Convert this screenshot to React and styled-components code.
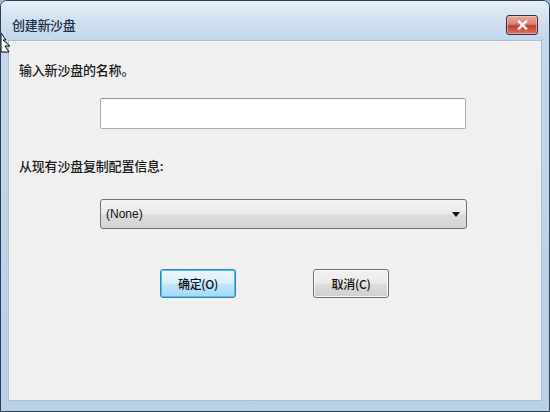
import styled, { createGlobalStyle } from 'styled-components'

const GlobalStyle = createGlobalStyle`
  html, body {
    margin: 0;
    padding: 0;
    background: #9fb7d3;
  }
  body {
    font-family: 'Noto Sans CJK SC', 'Liberation Sans', sans-serif;
  }
`

const Window = styled.div`
  position: relative;
  box-sizing: border-box;
  width: 550px;
  height: 412px;
  display: flex;
  flex-direction: column;
  border: 1px solid #2c3e50;
  border-radius: 7px 7px 0 0;
  background: linear-gradient(180deg, #dde9f5 0%, #c4d7ec 10%, #b9d0e9 100%);
  overflow: hidden;
`

const TitleBar = styled.div`
  height: 39px;
  display: flex;
  align-items: center;
  justify-content: space-between;
  padding: 0 11px 0 11px;
  box-sizing: border-box;
  background: linear-gradient(180deg, #e6eff8 0%, #d3e1f0 45%, #c2d6ec 100%);
`

const Title = styled.span`
  font-size: 13px;
  font-weight: 500;
  color: #1d2f45;
  letter-spacing: -0.3px;
  padding-top: 8px;
`

const CloseButton = styled.button`
  width: 32px;
  height: 20px;
  margin-top: 8px;
  padding: 0;
  display: flex;
  align-items: center;
  justify-content: center;
  border: 1px solid #3d2a3a;
  border-radius: 3px;
  background: linear-gradient(180deg, #e7aa9a 0%, #d98070 45%, #c0402e 55%, #d4786a 100%);
  box-shadow: inset 0 0 0 1px rgba(255, 220, 210, 0.5);
`

const Body = styled.div`
  flex: 1;
  margin: 0 7px 10px 7px;
  padding: 20px 0 0 9px;
  background: #f0f0f0;
  border: 1px solid #a9bfd6;
  display: flex;
  flex-direction: column;
`

const Label = styled.div`
  font-size: 13px;
  font-weight: 500;
  line-height: 18px;
  color: #1a1a1a;
  letter-spacing: -0.2px;
  padding-left: 1px;
  margin-top: ${p => p.$top || 0}px;
`

const Indent = styled.div`
  padding-left: ${p => p.$left}px;
  margin-top: ${p => p.$top}px;
  display: flex;
  gap: ${p => p.$gap || 0}px;
`

const TextInput = styled.input`
  box-sizing: border-box;
  width: 366px;
  height: 31px;
  border: 1px solid #abadb3;
  border-top-color: #8f949c;
  border-radius: 2px;
  background: #ffffff;
  outline: none;
`

const Select = styled.div`
  box-sizing: border-box;
  width: 367px;
  height: 30px;
  display: flex;
  align-items: center;
  justify-content: space-between;
  padding: 0 6px 0 5px;
  border: 1px solid #707070;
  border-radius: 3px;
  background: linear-gradient(180deg, #f4f4f4 0%, #ebebeb 48%, #dddddd 52%, #d3d3d3 100%);
  font-family: 'Liberation Sans', sans-serif;
  font-size: 12px;
  color: #111;
`

const Arrow = styled.span`
  width: 0;
  height: 0;
  border-left: 4px solid transparent;
  border-right: 4px solid transparent;
  border-top: 5px solid #111;
`

const Button = styled.button`
  box-sizing: border-box;
  width: 76px;
  height: 29px;
  border-radius: 3px;
  font-family: 'Noto Sans CJK SC', 'Liberation Sans', sans-serif;
  font-size: 12px;
  font-weight: 500;
  color: #111;
  letter-spacing: -0.3px;
  padding: 0;
  border: 1px solid ${p => (p.$primary ? '#3c7fb1' : '#707070')};
  background: ${p =>
    p.$primary
      ? 'linear-gradient(180deg, #eaf6fd 0%, #d9f0fc 48%, #bee6fd 52%, #a7d9f5 100%)'
      : 'linear-gradient(180deg, #f2f2f2 0%, #ebebeb 48%, #dddddd 52%, #cfcfcf 100%)'};
  box-shadow: ${p =>
    p.$primary ? 'inset 0 0 0 1px #48c3ee' : 'inset 0 0 0 1px rgba(255,255,255,0.8)'};
`

const Cursor = styled.svg`
  position: absolute;
  left: 0;
  top: 30px;
`

export default function App() {
  return (
    <>
      <GlobalStyle />
      <Window>
        <TitleBar>
          <Title>创建新沙盘</Title>
          <CloseButton aria-label="关闭">
            <svg width="11" height="10" viewBox="0 0 11 10">
              <path d="M2 1.5 L9 8.5 M9 1.5 L2 8.5" stroke="#fff" strokeWidth="2.4" strokeLinecap="square" />
            </svg>
          </CloseButton>
        </TitleBar>
        <Body>
          <Label>输入新沙盘的名称。</Label>
          <Indent $left={82} $top={19}>
            <TextInput />
          </Indent>
          <Label $top={28}>从现有沙盘复制配置信息:</Label>
          <Indent $left={82} $top={24}>
            <Select>
              <span>(None)</span>
              <Arrow />
            </Select>
          </Indent>
          <Indent $left={142} $top={40} $gap={77}>
            <Button $primary>确定(O)</Button>
            <Button>取消(C)</Button>
          </Indent>
        </Body>
        <Cursor width="12" height="22" viewBox="0 0 12 22">
          <path d="M0 2 L5 9 L2 9 L9 15 L4 15 L8 21 L0 21 Z" fill="#fff" stroke="#000" strokeWidth="1" />
        </Cursor>
      </Window>
    </>
  )
}
